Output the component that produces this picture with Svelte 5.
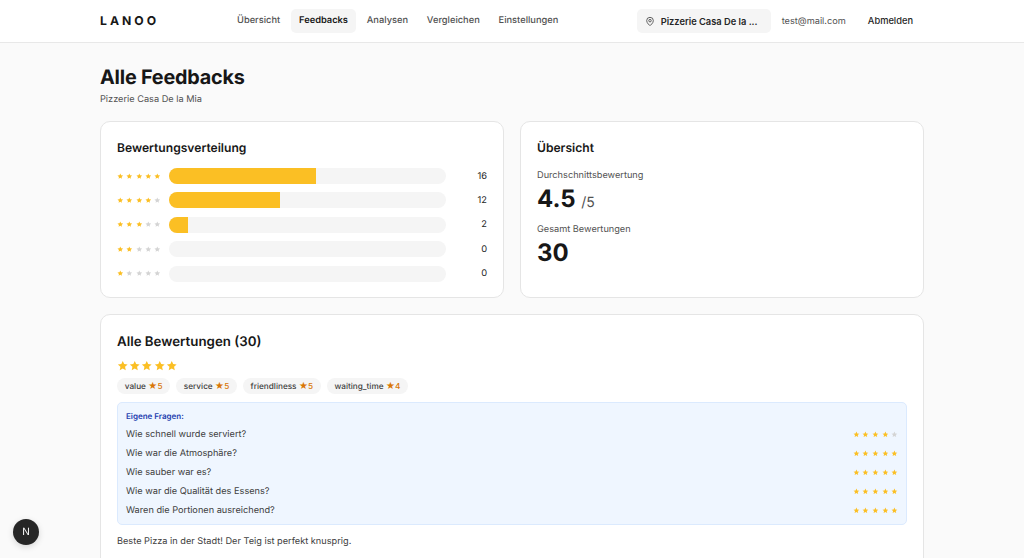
<script>
  const links = ["Übersicht", "Feedbacks", "Analysen", "Vergleichen", "Einstellungen"];
  const dist = [
    { stars: 5, count: 16, pct: 53 },
    { stars: 4, count: 12, pct: 40 },
    { stars: 3, count: 2, pct: 6.8 },
    { stars: 2, count: 0, pct: 0 },
    { stars: 1, count: 0, pct: 0 }
  ];
  const tags = [
    ["value", 5],
    ["service", 5],
    ["friendliness", 5],
    ["waiting_time", 4]
  ];
  const questions = [
    ["Wie schnell wurde serviert?", 4],
    ["Wie war die Atmosphäre?", 5],
    ["Wie sauber war es?", 5],
    ["Wie war die Qualität des Essens?", 5],
    ["Waren die Portionen ausreichend?", 5]
  ];
  const five = [1, 2, 3, 4, 5];
</script>

{#snippet stars(value, size, gap)}
  <span class="stars" style="gap: {gap}px">
    {#each five as n}
      <svg width={size} height={size} viewBox="0 0 24 24" class={n <= value ? "on" : "off"}>
        <path d="M12 2l3 6.6 7.2.8-5.4 4.8 1.5 7.1L12 17.7l-6.3 3.6 1.5-7.1L1.800 9.400 9 8.600z" />
      </svg>
    {/each}
  </span>
{/snippet}

<div class="page">
  <header>
    <div class="logo">LANOO</div>
    <nav>
      {#each links as link}
        <a href="#top" class:active={link === "Feedbacks"}>{link}</a>
      {/each}
    </nav>
    <div class="right">
      <button class="place">
        <svg width="10" height="11" viewBox="0 0 24 24" fill="none" stroke="#444" stroke-width="2">
          <path d="M20 10c0 6-8 12-8 12s-8-6-8-12a8 8 0 0 1 16 0z" />
          <circle cx="12" cy="10" r="3" />
        </svg>
        <span>Pizzerie Casa De la ...</span>
      </button>
      <span class="mail">test@mail.com</span>
      <button class="logout">Abmelden</button>
    </div>
  </header>

  <main>
    <h1>Alle Feedbacks</h1>
    <p class="sub">Pizzerie Casa De la Mia</p>

    <div class="grid">
      <section class="card">
        <h2>Bewertungsverteilung</h2>
        <div class="rows">
          {#each dist as d}
            <div class="row">
              {@render stars(d.stars, 6.6, 2.7)}
              <div class="track"><div class="fill" style="width: {d.pct}%"></div></div>
              <span class="count">{d.count}</span>
            </div>
          {/each}
        </div>
      </section>

      <section class="card">
        <h2>Übersicht</h2>
        <div class="label first">Durchschnittsbewertung</div>
        <div class="big">4.5 <small>/5</small></div>
        <div class="label">Gesamt Bewertungen</div>
        <div class="big">30</div>
      </section>
    </div>

    <section class="card reviews">
      <h2 class="large">Alle Bewertungen (30)</h2>
      <div class="review-stars">{@render stars(5, 11.5, 0.7)}</div>
      <div class="tags">
        {#each tags as [name, val]}
          <span class="tag">{name} <b><i>★</i>{val}</b></span>
        {/each}
      </div>
      <div class="questions">
        <div class="q-title">Eigene Fragen:</div>
        {#each questions as [q, val]}
          <div class="q">
            <span>{q}</span>
            {@render stars(val, 6.8, 2.8)}
          </div>
        {/each}
      </div>
      <p class="comment">Beste Pizza in der Stadt! Der Teig ist perfekt knusprig.</p>
    </section>
  </main>

  <div class="dev">N</div>
</div>

<style>
  :global(body) {
    margin: 0;
    background: #fafafa;
  }

  .page {
    height: 558px;
    overflow: hidden;
    font-family: Inter, "Liberation Sans", sans-serif;
    color: #171717;
    background: #fafafa;
    text-rendering: geometricPrecision;
  }

  header {
    height: 42px;
    background: #fff;
    border-bottom: 1px solid #e8e8e8;
    display: flex;
    align-items: center;
    padding: 0 100px;
  }

  .logo {
    font-size: 12.2px;
    font-weight: 700;
    letter-spacing: 3px;
    width: 129px;
    padding-bottom: 1px;
  }

  nav {
    display: flex;
    gap: 2.8px;
  }

  nav a {
    font-size: 9.3px;
    font-weight: 500;
    color: #525252;
    text-decoration: none;
    padding: 0 8px;
    height: 24px;
    line-height: 24.6px;
    border-radius: 5px;
  }

  nav a.active {
    background: #f5f5f5;
    color: #171717;
    font-weight: 600;
  }

  .right {
    margin-left: auto;
    margin-right: 2px;
    display: flex;
    align-items: center;
  }

  button {
    font-family: inherit;
    border: none;
    background: none;
    padding: 0;
  }

  .place {
    display: flex;
    align-items: center;
    gap: 6px;
    width: 134px;
    height: 24px;
    box-sizing: border-box;
    padding-left: 8px;
    background: #f5f5f5;
    border-radius: 5px;
    font-size: 9.3px;
    font-weight: 600;
    color: #262626;
  }

  .mail {
    font-size: 9.2px;
    color: #525252;
    margin-left: 11px;
  }

  .logout {
    font-size: 9.3px;
    font-weight: 500;
    color: #262626;
    margin-left: 22px;
    margin-right: 9px;
    margin-bottom: 1px;
  }

  main {
    width: 824px;
    margin: 0 auto;
    padding-top: 22px;
  }

  h1 {
    margin: 0;
    font-size: 19.8px;
    line-height: 25px;
    font-weight: 700;
    letter-spacing: -0.2px;
  }

  .sub {
    margin: 2.5px 0 0;
    font-size: 9.2px;
    line-height: 14px;
    color: #525252;
  }

  .grid {
    display: grid;
    grid-template-columns: 1fr 1fr;
    gap: 16px;
    margin-top: 14.5px;
  }

  .card {
    background: #fff;
    border: 1px solid #e5e5e5;
    border-radius: 10px;
    box-sizing: border-box;
    padding: 17px 16px 16px;
    height: 177px;
  }

  h2 {
    margin: 0;
    font-size: 12.1px;
    line-height: 18px;
    font-weight: 600;
  }

  h2.large {
    font-size: 13.3px;
    line-height: 20px;
  }

  .rows {
    margin-top: 11px;
    display: flex;
    flex-direction: column;
    gap: 8.4px;
  }

  .row {
    display: flex;
    align-items: center;
    height: 16px;
  }

  .stars {
    display: inline-flex;
    align-items: center;
  }

  .stars svg {
    display: block;
  }

  .on {
    fill: #fbbf24;
  }

  .off {
    fill: #d4d4d4;
  }

  .row .stars {
    width: 52px;
    flex: none;
  }

  .track {
    width: 277px;
    height: 16px;
    background: #f5f5f5;
    border-radius: 8px;
    overflow: hidden;
    flex: none;
  }

  .fill {
    height: 100%;
    background: #fbbf24;
  }

  .count {
    flex: 1;
    text-align: right;
    font-size: 9.3px;
    color: #262626;
  }

  .label {
    font-size: 9.2px;
    line-height: 14px;
    color: #525252;
    margin-top: 5px;
  }

  .label.first {
    margin-top: 12px;
  }

  .big {
    margin-top: 1px;
    font-size: 24px;
    line-height: 30px;
    font-weight: 700;
  }

  .big small {
    font-size: 14px;
    font-weight: 400;
    color: #525252;
  }

  .reviews {
    margin-top: 16px;
    height: 300px;
  }

  .review-stars {
    margin-top: 7px;
    height: 14px;
    display: flex;
    align-items: center;
  }

  .tags {
    display: flex;
    gap: 5.7px;
    margin-top: 5px;
  }

  .tag {
    font-size: 8.2px;
    font-weight: 500;
    line-height: 16px;
    padding: 0 7.8px;
    background: #f5f5f5;
    border-radius: 8px;
    color: #404040;
  }

  .tag b {
    font-weight: 500;
    color: #d97706;
  }

  .tag i {
    font-style: normal;
    font-size: 9px;
    line-height: 10px;
  }

  .questions {
    margin-top: 8px;
    padding: 8px;
    height: 123px;
    box-sizing: border-box;
    background: #eff6ff;
    border: 1px solid #dbeafe;
    border-radius: 5px;
  }

  .q-title {
    font-size: 8px;
    line-height: 11px;
    font-weight: 600;
    color: #1e40af;
  }

  .q {
    display: flex;
    justify-content: space-between;
    align-items: center;
    height: 19px;
    font-size: 9.2px;
    color: #404040;
  }

  .q-title + .q {
    margin-top: 2.5px;
  }

  .comment {
    margin: 9.5px 0 0;
    font-size: 9.2px;
    line-height: 14px;
    color: #404040;
  }

  .dev {
    position: fixed;
    left: 13px;
    top: 519px;
    width: 26px;
    height: 26px;
    border-radius: 50%;
    background: #262626;
    color: #fff;
    font-size: 10px;
    line-height: 26px;
    text-align: center;
    box-shadow: 0 2px 6px rgba(0, 0, 0, 0.15);
  }
</style>
